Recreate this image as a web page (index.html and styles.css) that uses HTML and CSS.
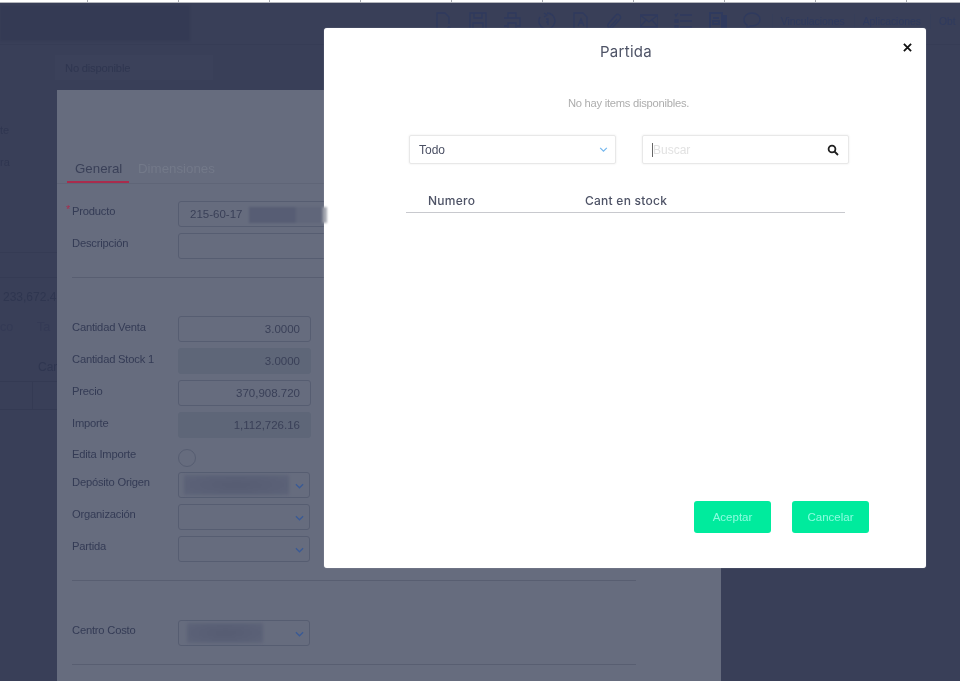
FILE: index.html
```html
<!DOCTYPE html>
<html lang="es">
<head>
<meta charset="utf-8">
<title>Partida</title>
<link rel="stylesheet" href="styles.css">
</head>
<body>
<div class="page">
  <div class="backdrop">
    <div class="ruler">
      <span class="tick tick-first"></span><span class="tick"></span><span class="tick"></span><span class="tick"></span><span class="tick"></span><span class="tick"></span><span class="tick"></span><span class="tick"></span><span class="tick"></span><span class="tick"></span>
    </div>
    <header class="toolbar">
      <div class="toolbar-smudge"></div>
      <div class="tools">
        <svg class="tool" viewBox="0 0 18 18"><path d="M9 17H2V1h8l4 4v7M14 14v4M12 16h4"/></svg>
        <svg class="tool" viewBox="0 0 18 18"><path d="M1 1h16v16H1zM5 1v5h8V1M4 17v-6h10v6"/></svg>
        <svg class="tool" viewBox="0 0 18 18"><path d="M5 6V1h8v5M1 6h16v8h-3M4 14H1M5 11h8v6H5z"/></svg>
        <svg class="tool" viewBox="0 0 18 18"><path d="M9 1a8 8 0 1 1-7 4M6 1l3 2-3 2M8 7h2v6M8 10h2"/></svg>
        <svg class="tool" viewBox="0 0 18 18"><path d="M2 17V1h9l4 4v12zM6 14l3-7 3 7M7 11h4"/></svg>
        <svg class="tool" viewBox="0 0 18 18"><path d="M3 16c-2-2-1-4 0-5l7-8c2-2 6 1 4 4l-7 8c-1 1-2 1-3 0l7-8"/></svg>
        <svg class="tool" viewBox="0 0 18 18"><path d="M0 3h18v12H0zM0 3l9 7 9-7M0 15l6-7M18 15l-6-7"/></svg>
        <svg class="tool" viewBox="0 0 18 18"><path d="M6 3h12M6 9h12M6 15h12M1 2l1 2 2-3M1 8h3v2H1zM1 14h3v2H1z"/></svg>
        <svg class="tool tool-solid" viewBox="0 0 18 18"><path d="M1 1h12v16H1zM4 6h6M4 9h6v3H4zM15 4h2v13h-2z"/></svg>
        <svg class="tool" viewBox="0 0 18 18"><path d="M9 1c5 0 8 3 8 6.500S14 14 9 14H7l-3 3v-4C2 12 1 10 1 7.500 1 4 4 1 9 1z"/></svg>
      </div>
      <nav class="toolbar-tabs">
        <span class="toolbar-tab">Vinculaciones</span>
        <span class="toolbar-tab">Aplicaciones</span>
        <span class="toolbar-tab">Obt</span>
      </nav>
    </header>
    <div class="status-row"><div class="status-box">No disponible</div></div>
    <div class="main-row">
      <aside class="left-col">
        <div class="left-frag left-te">te</div>
        <div class="left-frag left-ra">ra</div>
        <div class="left-rule"></div>
        <div class="left-amount">233,672.4</div>
        <div class="left-tabs"><span class="left-tab-a">co</span><span>Ta</span></div>
        <div class="left-head">Car</div>
        <div class="left-cells"><span class="left-cell"></span></div>
      </aside>
      <section class="drawer">
        <div class="tabs">
          <span class="tab tab-active">General</span>
          <span class="tab">Dimensiones</span>
        </div>
        <div class="rows rows-top">
          <div class="row"><label class="lbl lbl-req">Producto</label><div class="field field-wide">215-60-17</div></div>
          <div class="row"><label class="lbl">Descripción</label><div class="field field-wide"></div></div>
        </div>
        <hr class="rule rule-a">
        <div class="rows rows-qty">
          <div class="row"><label class="lbl">Cantidad Venta</label><div class="field field-num">3.0000</div></div>
          <div class="row"><label class="lbl">Cantidad Stock 1</label><div class="field field-num field-off">3.0000</div></div>
          <div class="row"><label class="lbl">Precio</label><div class="field field-num">370,908.720</div></div>
          <div class="row"><label class="lbl">Importe</label><div class="field field-num field-off">1,112,726.16</div></div>
          <div class="row row-check"><label class="lbl">Edita Importe</label><span class="radio"></span></div>
        </div>
        <div class="rows rows-sel">
          <div class="row"><label class="lbl">Depósito Origen</label><div class="field field-sel"><span class="smudge smudge-dep"></span><svg class="chev" viewBox="0 0 10 6"><path d="M1 1l4 4 4-4"/></svg></div></div>
          <div class="row"><label class="lbl">Organización</label><div class="field field-sel"><svg class="chev" viewBox="0 0 10 6"><path d="M1 1l4 4 4-4"/></svg></div></div>
          <div class="row"><label class="lbl">Partida</label><div class="field field-sel"><svg class="chev" viewBox="0 0 10 6"><path d="M1 1l4 4 4-4"/></svg></div></div>
        </div>
        <hr class="rule rule-b">
        <div class="rows rows-cc">
          <div class="row"><label class="lbl">Centro Costo</label><div class="field field-sel"><span class="smudge smudge-cc"></span><svg class="chev" viewBox="0 0 10 6"><path d="M1 1l4 4 4-4"/></svg></div></div>
        </div>
        <hr class="rule rule-c">
      </section>
    </div>
  </div>

  <div class="modal" role="dialog">
    <svg class="close" viewBox="0 0 10 10"><path d="M1 1l8 8M9 1L1 9"/></svg>
    <h2 class="modal-title">Partida</h2>
    <p class="modal-empty">No hay items disponibles.</p>
    <div class="filters">
      <div class="box box-select">
        <span>Todo</span>
        <svg class="box-chev" viewBox="0 0 10 6"><path d="M1 1l4 4 4-4"/></svg>
      </div>
      <div class="box box-search">
        <span class="caret"></span><span class="placeholder">Buscar</span>
        <svg class="search" viewBox="0 0 12 12"><circle cx="5" cy="5" r="3.400"/><path d="M7.500 7.500L11 11"/></svg>
      </div>
    </div>
    <div class="table-head">
      <span class="th th-num">Numero</span>
      <span class="th">Cant en stock</span>
    </div>
    <div class="actions">
      <button class="btn">Aceptar</button>
      <button class="btn">Cancelar</button>
    </div>
  </div>

  <div class="smudge-over"></div>
</div>
</body>
</html>
```

FILE: styles.css
```css
* { box-sizing: border-box; }
html, body { margin: 0; padding: 0; }
body {
  width: 960px;
  height: 681px;
  overflow: hidden;
  font-family: "Liberation Sans", Arial, sans-serif;
  background: #393f58;
}
.page {
  position: relative;
  width: 960px;
  height: 681px;
  overflow: hidden;
  filter: blur(0.35px);
}
.backdrop { height: 681px; overflow: hidden; background: #393f58; }

.ruler {
  display: flex;
  height: 3px;
  background: #fff;
  border-bottom: 1px solid #b4b6bc;
}
.tick { width: 91px; flex: none; border-right: 1px solid #a8aab0; }
.tick-first { width: 88px; }

.toolbar {
  display: flex;
  align-items: center;
  height: 42px;
  border-bottom: 1px solid #363c55;
}
.toolbar-smudge {
  width: 190px;
  height: 36px;
  flex: none;
  margin-top: -2px;
  background: #343a54;
  filter: blur(1px);
}
.tools {
  display: flex;
  gap: 16.200px;
  margin-left: 245px;
  margin-top: -6px;
}
.tool {
  width: 18px;
  height: 18px;
  flex: none;
  fill: none;
  stroke: #2f3a5e;
  stroke-width: 1.300;
}
.tool-solid { stroke-width: 2; }
.toolbar-tabs {
  display: flex;
  margin-left: 11px;
  margin-top: -5px;
  font-size: 10.400px;
  color: #2f3a5e;
  white-space: nowrap;
}
.toolbar-tab { padding: 2px 9px 2px 8px; border-left: 1px solid #363e59; }

.status-row { height: 45px; padding: 10px 0 0 55px; }
.status-box {
  width: 158px;
  height: 25px;
  padding: 0 10px;
  background: #3b415a;
  color: #2f3650;
  font-size: 11.200px;
  letter-spacing: -.2px;
  line-height: 26px;
}

.main-row { display: flex; height: 600px; }
.left-col {
  width: 57px;
  flex: none;
  overflow: hidden;
  color: #2f3650;
  font-size: 12px;
  white-space: nowrap;
}
.left-frag { height: 14px; line-height: 14px; font-size: 11px; }
.left-te { margin-top: 33px; }
.left-ra { margin-top: 18px; }
.left-rule { height: 25px; margin-top: 83px; border-top: 1px solid #353b54; }
.left-amount {
  height: 43px;
  padding: 12px 0 0 3px;
  line-height: 14px;
  border-top: 1px solid #353b54;
}
.left-tabs { display: flex; height: 20px; font-size: 12.500px; line-height: 14px; color: #343a55; }
.left-tab-a { width: 37px; }
.left-head {
  margin-top: 20px;
  padding-left: 38px;
  height: 21px;
  font-size: 12px;
  line-height: 14px;
}
.left-cells {
  height: 29px;
  border-top: 1px solid #343a53;
  border-bottom: 1px solid #343a53;
}
.left-cell { display: block; width: 33px; height: 27px; border-right: 1px solid #343a53; }

.drawer {
  width: 664px;
  flex: none;
  overflow: hidden;
  background: #666c7e;
  color: #343b55;
  font-size: 11.200px;
  letter-spacing: -.2px;
}
.tabs {
  display: flex;
  height: 94px;
  padding: 70px 0 0 10px;
  border-bottom: 1px solid #5f6577;
  align-items: flex-start;
  letter-spacing: 0;
}
.tab {
  padding: 0 8px;
  height: 23px;
  line-height: 18px;
  font-size: 13.300px;
  color: #737989;
}
.tab-active {
  width: 62px;
  color: #3a4058;
  border-bottom: 2.500px solid #a92c4d;
}
.tab:not(.tab-active) { margin-left: 1px; }

.rows { display: flex; flex-direction: column; gap: 6px; padding-left: 15px; }
.rows-top { margin-top: 17px; }
.rows-qty { margin-top: 38px; }
.rows-sel { margin-top: 8px; }
.rows-cc { margin-top: 39px; }
.row { display: flex; align-items: flex-start; height: 26px; }
.row-check { height: 17px; margin-top: 5px; margin-bottom: -2px; }
.lbl {
  position: relative;
  width: 106px;
  flex: none;
  margin-top: 3px;
  line-height: 14px;
  white-space: nowrap;
}
.rows-qty .lbl { margin-top: 4px; }
.rows-qty .row-check .lbl { margin-top: -2px; }
.lbl-req::before {
  content: "*";
  position: absolute;
  left: -6px;
  top: -2px;
  color: #a92c4d;
  font-size: 11px;
}
.field {
  display: flex;
  align-items: center;
  width: 133px;
  height: 26px;
  padding: 1px 10px 1px 11px;
  border: 1px solid #565d71;
  border-radius: 3px;
  color: #3a4058;
  white-space: nowrap;
  font-size: 11.500px;
  letter-spacing: 0;
}
.field-wide { width: 480px; flex: none; }
.field-num { justify-content: flex-end; }
.field-off { background: #5e6678; border-color: #5e6678; }
.field-sel { position: relative; width: 132px; padding: 0 5px; justify-content: space-between; }
.radio {
  width: 18px;
  height: 18px;
  border: 1px solid #565d71;
  border-radius: 50%;
}
.chev {
  width: 9px;
  height: 6px;
  margin-left: auto;
  margin-top: 2px;
  fill: none;
  stroke: #3a5a96;
  stroke-width: 1.400;
}
.smudge {
  display: block;
  height: 20px;
  background: radial-gradient(ellipse at center, #565c72 0, #5a6076 60%, #5e6479 100%);
  filter: blur(1.500px);
}
.smudge-dep { width: 105px; }
.smudge-cc { width: 76px; margin-left: 3px; }
.rule { height: 0; margin: 0 0 0 15px; width: 564px; border: 0; border-top: 1px solid #585e71; }
.rule-a { margin-top: 18px; }
.rule-b { margin-top: 18px; }
.rule-c { margin-top: 18px; }

.modal {
  position: absolute;
  left: 324px;
  top: 28px;
  width: 602px;
  height: 540px;
  padding: 0 0 35px 82px;
  display: flex;
  flex-direction: column;
  background: #fff;
  border-radius: 3px;
  box-shadow: 0 0 1px rgba(200, 203, 210, .8);
  color: #4b5064;
}
.close {
  position: absolute;
  right: 14px;
  top: 15px;
  width: 9px;
  height: 9px;
  fill: none;
  stroke: #111;
  stroke-width: 2;
}
.modal-title {
  margin: 15px 0 0 -80px;
  text-align: center;
  font: 400 15px/18px Inter, "Open Sans", sans-serif;
  letter-spacing: .3px;
  color: #4e5366;
}
.modal-empty {
  margin: 35px 0 0 -82px;
  text-align: center;
  font-size: 11.200px;
  letter-spacing: -.25px;
  line-height: 14px;
  color: #adadad;
  padding-left: 7px;
}
.filters { display: flex; gap: 26px; margin: 25px 0 0 3px; }
.box {
  display: flex;
  align-items: center;
  width: 207px;
  height: 29px;
  padding: 0 9px;
  border: 1px solid #e8e8e8;
  border-radius: 2px;
  box-shadow: 0 0 2px rgba(0, 0, 0, .1);
  font-size: 12px;
  color: #4b5064;
}
.box-chev {
  width: 9px;
  height: 5px;
  margin-left: auto;
  margin-right: -2px;
  fill: none;
  stroke: #74b7ee;
  stroke-width: 1.400;
}
.caret { width: 1px; height: 14px; background: #666; }
.placeholder { color: #e2e2e2; }
.search {
  width: 12px;
  height: 12px;
  margin-left: auto;
  fill: none;
  stroke: #1f1f1f;
  stroke-width: 1.800;
}
.table-head {
  display: flex;
  width: 439px;
  height: 19px;
  margin-top: 30px;
  padding-left: 22px;
  border-bottom: 1px solid #c8c9ce;
  font: 500 12px/14px Inter, "Open Sans", sans-serif;
  letter-spacing: .25px;
  color: #4e5366;
}
.th-num { width: 157px; }
.actions { display: flex; gap: 21px; margin-top: auto; padding-left: 288px; }
.btn {
  width: 77px;
  height: 32px;
  padding: 0;
  border: 0;
  border-radius: 3px;
  background: #00eb9d;
  color: #8cfce0;
  font: 11.500px "Liberation Sans", Arial, sans-serif;
}
.smudge-over {
  position: absolute;
  left: 249px;
  top: 207px;
  width: 78px;
  height: 16px;
  background: linear-gradient(90deg, #575d74 0, #575d74 58%, #60667a 62%, #60667a 93%, #a6a9b2 96%, #a6a9b2 100%);
  filter: blur(.8px);
}
```
